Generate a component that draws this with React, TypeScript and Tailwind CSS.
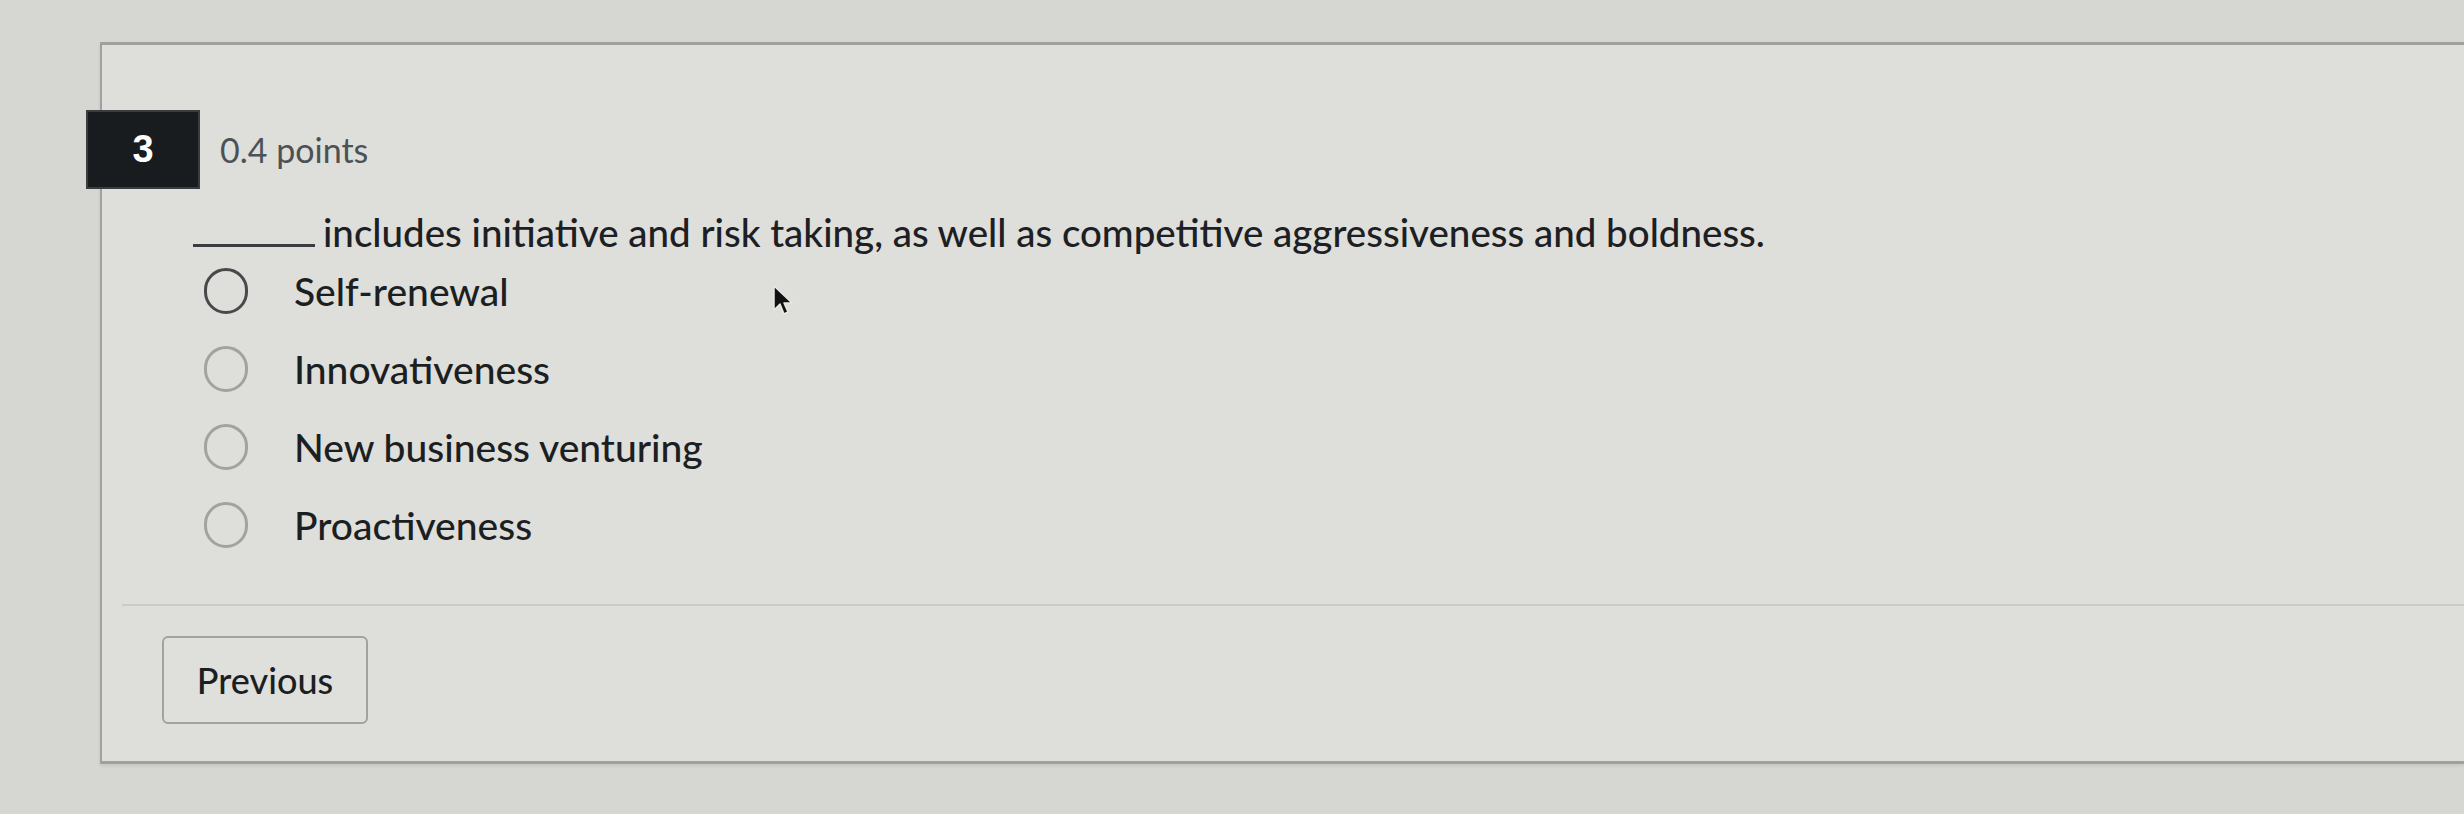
const options = ["Self-renewal", "Innovativeness", "New business venturing", "Proactiveness"];

function Cursor() {
    return (
        <svg className="absolute left-[772px] top-[284px]" width="22" height="34" viewBox="0 0 22 34">
            <path d="M2 2 L2 26 L8 20 L12 30 L16 28 L12 19 L20 19 Z" fill="#111" stroke="#e8e8e8" strokeWidth="1.5" strokeLinejoin="round" />
        </svg>
    );
}

export default function App() {
    return (
        <div className="relative w-[2464px] h-[814px] overflow-hidden bg-[#d6d6d3] pt-[42px] font-['Lato','Noto_Sans',sans-serif]">
            <div className="ml-[100px] h-[722px] border-t-[3px] border-l-2 border-b-[3px] border-[#a0a09e] bg-[#dededb] shadow-[0_2px_3px_rgba(0,0,0,0.08)]">
                <div className="pt-[65px] flex items-center">
                    <div className="-ml-[16px] w-[114px] h-[79px] bg-[#181c1f] border-2 border-[#3a3d40] flex items-center justify-center text-white text-[38px] font-['Liberation_Sans',sans-serif] font-semibold">
                        3
                    </div>
                    <span className="ml-[20px] text-[34px] text-[#4c5156]">0.4 points</span>
                </div>

                <div className="mt-[20px] pl-[91px] flex items-end text-[38.5px] leading-[46px] font-medium text-[#1c2023]">
                    <span className="inline-block w-[122px] h-[3px] bg-[#3a3d40] mb-[8px] mr-[8px]" />
                    <span>includes initiative and risk taking, as well as competitive aggressiveness and boldness.</span>
                </div>

                <div className="-mt-[3px] pl-[102px] flex flex-col">
                    {options.map((o, i) => (
                        <label key={o} className="flex items-center h-[78px]">
                            <span
                                className={
                                    i === 0
                                        ? "w-[44px] h-[46px] rounded-full border-[3px] border-[#47494b]"
                                        : "w-[44px] h-[46px] rounded-full border-[3px] border-[#a2a2a2]"
                                }
                            />
                            <span className="ml-[46px] text-[39px] font-medium text-[#1c1f22]">{o}</span>
                        </label>
                    ))}
                </div>

                <div className="mt-[40px] ml-[20px] border-t-2 border-[#cbcbc8]" />

                <div className="pt-[30px] pl-[60px]">
                    <button className="w-[206px] h-[88px] rounded-[6px] border-2 border-[#a2a2a0] bg-[#dfdfdc] text-[36px] font-medium text-[#1c1f22]">
                        Previous
                    </button>
                </div>
            </div>
            <Cursor />
        </div>
    );
}
